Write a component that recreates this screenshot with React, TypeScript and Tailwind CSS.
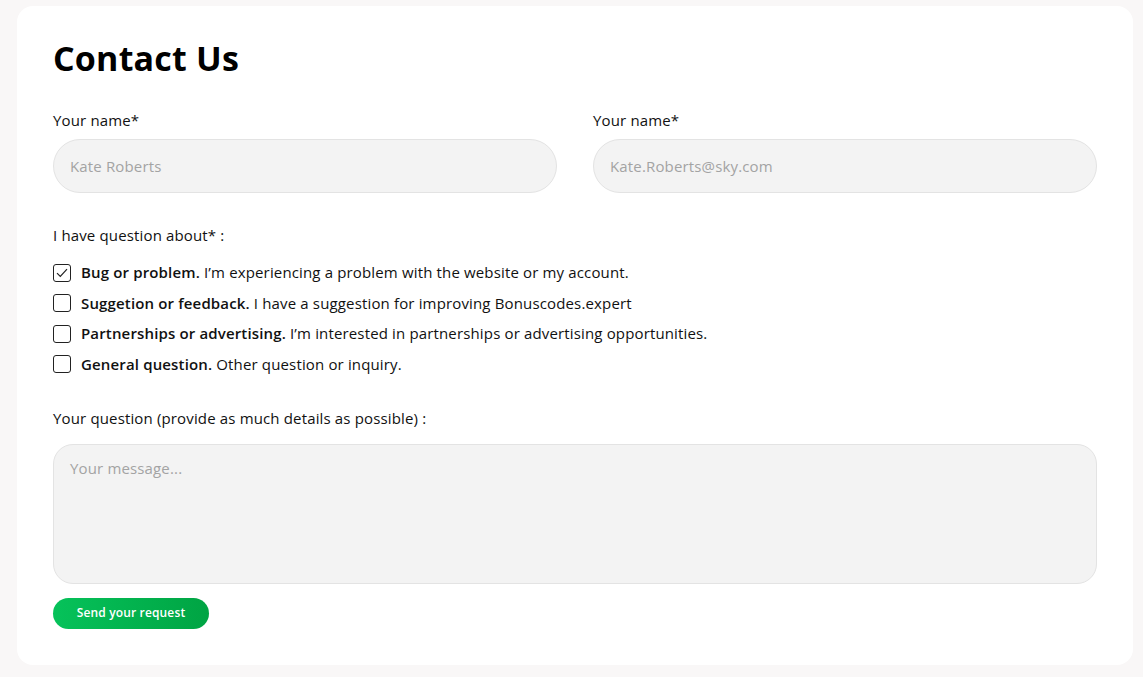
import { useState } from "react";

const topics = [
  { id: "bug", title: "Bug or problem.", text: "I’m experiencing a problem with the website or my account." },
  { id: "suggest", title: "Suggetion or feedback.", text: "I have a suggestion for improving Bonuscodes.expert" },
  { id: "partner", title: "Partnerships or advertising.", text: "I’m interested in partnerships or advertising opportunities." },
  { id: "general", title: "General question.", text: "Other question or inquiry." },
];

export default function App() {
  const [checked, setChecked] = useState<string[]>(["bug"]);

  const toggle = (id: string) => {
    setChecked(checked.includes(id) ? checked.filter((c) => c !== id) : [...checked, id]);
  };

  return (
    <div className="min-h-[677px] bg-[#f9f7f7] pl-[17px] pr-[10px] pt-[6px] pb-[13px] font-['Open_Sans',sans-serif] tracking-[0.15px] text-[#111]">
      <div className="rounded-[16px] bg-white px-[36px] pt-[32px] pb-[36px]">
        <h1 className="text-[34px] font-bold leading-[40px] tracking-[0.2px] text-black">Contact Us</h1>

        {/* name + email */}
        <div className="mt-[32px] grid grid-cols-2 gap-[36px]">
          <label className="flex flex-col">
            <span className="text-[15px] leading-[20px]">Your name*</span>
            <input
              placeholder="Kate Roberts"
              className="mt-[9px] h-[54px] rounded-full border border-[#e3e3e3] bg-[#f3f3f3] px-[16px] text-[15px] outline-none placeholder:text-[#a3a3a3]"
            />
          </label>
          <label className="flex flex-col">
            <span className="text-[15px] leading-[20px]">Your name*</span>
            <input
              placeholder="Kate.Roberts@sky.com"
              className="mt-[9px] h-[54px] rounded-full border border-[#e3e3e3] bg-[#f3f3f3] px-[16px] text-[15px] outline-none placeholder:text-[#a3a3a3]"
            />
          </label>
        </div>

        <p className="mt-[32px] text-[15px] leading-[20px]">I have question about* :</p>

        <div className="mt-[18px] flex flex-col gap-[11.5px]">
          {topics.map((t) => (
            <button key={t.id} onClick={() => toggle(t.id)} className="flex items-center gap-[10px] text-left">
              <span className="flex h-[18px] w-[18px] shrink-0 items-center justify-center rounded-[3px] border border-[#222]">
                {checked.includes(t.id) && (
                  <svg width="12" height="10" viewBox="0 0 12 10" fill="none">
                    <path d="M1 5.2l3.3 3.3L11 1.2" stroke="#222" strokeWidth="1.2" />
                  </svg>
                )}
              </span>
              <span className="text-[15px] leading-[19px]">
                <strong className="font-semibold">{t.title}</strong> {t.text}
              </span>
            </button>
          ))}
        </div>

        <p className="mt-[34px] text-[15px] leading-[20px]">Your question (provide as much details as possible) :</p>

        <textarea
          placeholder="Your message..."
          className="mt-[16px] block h-[140px] w-full resize-none rounded-[20px] border border-[#e3e3e3] bg-[#f3f3f3] px-[16px] py-[12px] text-[15px] outline-none placeholder:text-[#a3a3a3]"
        />

        <button className="mt-[14px] h-[31px] w-[156px] rounded-full bg-gradient-to-r from-[#06c25a] to-[#00a443] text-[12px] font-semibold text-white">
          Send your request
        </button>
      </div>
    </div>
  );
}
